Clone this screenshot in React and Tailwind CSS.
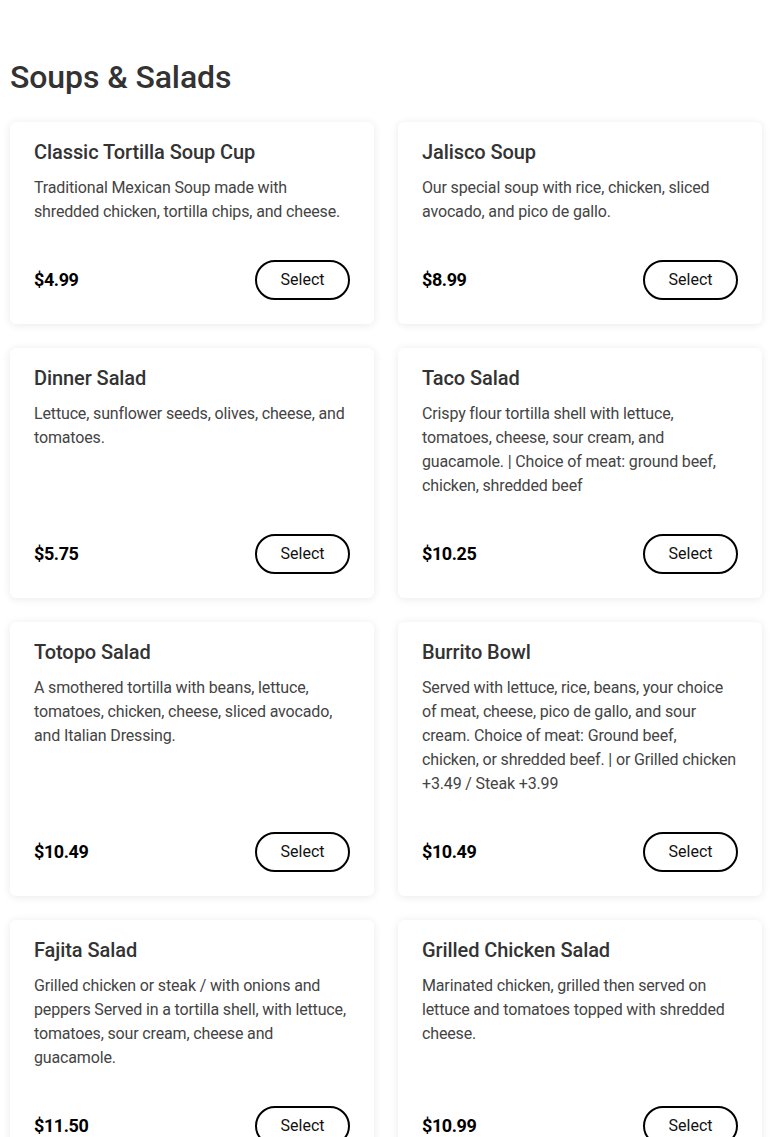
const ITEMS = [
  { name: 'Classic Tortilla Soup Cup', desc: 'Traditional Mexican Soup made with shredded chicken, tortilla chips, and cheese.', price: '$4.99' },
  { name: 'Jalisco Soup', desc: 'Our special soup with rice, chicken, sliced avocado, and pico de gallo.', price: '$8.99' },
  { name: 'Dinner Salad', desc: 'Lettuce, sunflower seeds, olives, cheese, and tomatoes.', price: '$5.75' },
  { name: 'Taco Salad', desc: 'Crispy flour tortilla shell with lettuce, tomatoes, cheese, sour cream, and guacamole. | Choice of meat: ground beef, chicken, shredded beef', price: '$10.25' },
  { name: 'Totopo Salad', desc: 'A smothered tortilla with beans, lettuce, tomatoes, chicken, cheese, sliced avocado, and Italian Dressing.', price: '$10.49' },
  {
    name: 'Burrito Bowl',
    desc: <>Served with lettuce, rice, beans, your choice of meat, cheese, pico de gallo, and sour cream. Choice of meat: Ground beef,<br />chicken, or shredded beef. | or Grilled chicken +3.49 / Steak +3.99</>,
    price: '$10.49',
  },
  { name: 'Fajita Salad', desc: 'Grilled chicken or steak / with onions and peppers Served in a tortilla shell, with lettuce, tomatoes, sour cream, cheese and guacamole.', price: '$11.50' },
  { name: 'Grilled Chicken Salad', desc: 'Marinated chicken, grilled then served on lettuce and tomatoes topped with shredded cheese.', price: '$10.99' },
];

function MenuCard({ item }) {
  return (
    <div className="flex flex-col bg-white rounded-md shadow-[0_1px_8px_rgba(0,0,0,0.09)] px-6 pt-[18px] pb-6">
      <h3 className="text-[20px] leading-6 font-medium tracking-[-0.08px] text-[#333]">{item.name}</h3>
      <p className="flex-1 mt-3 text-[16px] leading-6 tracking-[-0.15px] text-[#444]">{item.desc}</p>
      <div className="mt-9 flex items-center justify-between">
        <span className="text-[18px] leading-6 font-bold tracking-[-0.4px] text-black -mt-px">{item.price}</span>
        <button className="w-[95px] h-10 rounded-full border-2 border-black text-[16px] text-[#111] bg-white">
          Select
        </button>
      </div>
    </div>
  );
}

export default function App() {
  return (
    <div className="min-h-screen bg-white px-[10px] pt-[58px] pb-10 font-['Roboto',sans-serif]">
      <h1 className="text-[32px] leading-[38px] font-medium tracking-[-0.1px] text-[#333] mb-[26px]">Soups &amp; Salads</h1>
      <div className="grid grid-cols-2 gap-6">
        {ITEMS.map(item => (
          <MenuCard key={item.name} item={item} />
        ))}
      </div>
    </div>
  );
}
